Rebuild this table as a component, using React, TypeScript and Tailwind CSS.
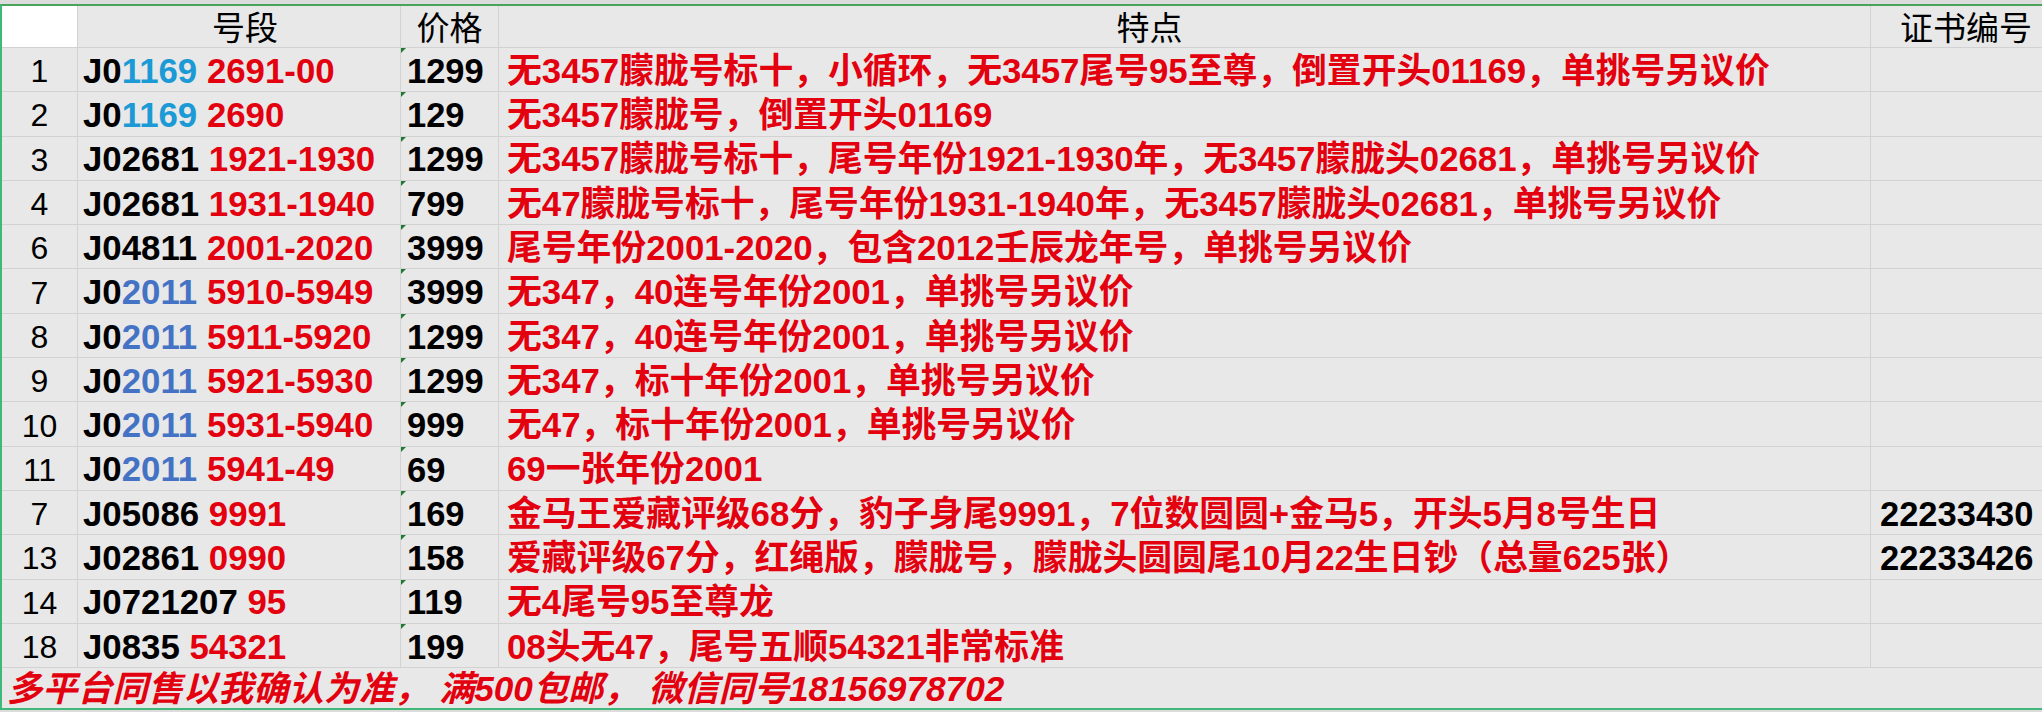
import React from 'react';

type Seg = { t: string; c?: 'red' | 'sky' | 'blue' };

type Row = {
  no: string;
  code: Seg[];
  price: string;
  note: string;
  cert?: string;
};

const rows: Row[] = [
  { no: '1', code: [{ t: 'J0' }, { t: '1169', c: 'sky' }, { t: ' ' }, { t: '2691-00', c: 'red' }], price: '1299', note: '无3457朦胧号标十，小循环，无3457尾号95至尊，倒置开头01169，单挑号另议价' },
  { no: '2', code: [{ t: 'J0' }, { t: '1169', c: 'sky' }, { t: ' ' }, { t: '2690', c: 'red' }], price: '129', note: '无3457朦胧号，倒置开头01169' },
  { no: '3', code: [{ t: 'J02681 ' }, { t: '1921-1930', c: 'red' }], price: '1299', note: '无3457朦胧号标十，尾号年份1921-1930年，无3457朦胧头02681，单挑号另议价' },
  { no: '4', code: [{ t: 'J02681 ' }, { t: '1931-1940', c: 'red' }], price: '799', note: '无47朦胧号标十，尾号年份1931-1940年，无3457朦胧头02681，单挑号另议价' },
  { no: '6', code: [{ t: 'J04811 ' }, { t: '2001-2020', c: 'red' }], price: '3999', note: '尾号年份2001-2020，包含2012壬辰龙年号，单挑号另议价' },
  { no: '7', code: [{ t: 'J0' }, { t: '2011', c: 'blue' }, { t: ' ' }, { t: '5910-5949', c: 'red' }], price: '3999', note: '无347，40连号年份2001，单挑号另议价' },
  { no: '8', code: [{ t: 'J0' }, { t: '2011', c: 'blue' }, { t: ' ' }, { t: '5911-5920', c: 'red' }], price: '1299', note: '无347，40连号年份2001，单挑号另议价' },
  { no: '9', code: [{ t: 'J0' }, { t: '2011', c: 'blue' }, { t: ' ' }, { t: '5921-5930', c: 'red' }], price: '1299', note: '无347，标十年份2001，单挑号另议价' },
  { no: '10', code: [{ t: 'J0' }, { t: '2011', c: 'blue' }, { t: ' ' }, { t: '5931-5940', c: 'red' }], price: '999', note: '无47，标十年份2001，单挑号另议价' },
  { no: '11', code: [{ t: 'J0' }, { t: '2011', c: 'blue' }, { t: ' ' }, { t: '5941-49', c: 'red' }], price: '69', note: '69一张年份2001' },
  { no: '7', code: [{ t: 'J05086 ' }, { t: '9991', c: 'red' }], price: '169', note: '金马王爱藏评级68分，豹子身尾9991，7位数圆圆+金马5，开头5月8号生日', cert: '22233430' },
  { no: '13', code: [{ t: 'J02861 ' }, { t: '0990', c: 'red' }], price: '158', note: '爱藏评级67分，红绳版，朦胧号，朦胧头圆圆尾10月22生日钞（总量625张）', cert: '22233426' },
  { no: '14', code: [{ t: 'J0721207 ' }, { t: '95', c: 'red' }], price: '119', note: '无4尾号95至尊龙' },
  { no: '18', code: [{ t: 'J0835 ' }, { t: '54321', c: 'red' }], price: '199', note: '08头无47，尾号五顺54321非常标准' },
];

const segColor = {
  red: 'text-[#e3000f]',
  sky: 'text-[#1b9ad6]',
  blue: 'text-[#4472c4]',
};

const cell = 'flex items-center border-b border-r border-[#d2d2d2] pt-[3px]';

export default function App() {
  return (
    <div className="h-[712px] w-[2042px] overflow-hidden bg-[#dcdcdc] pt-[4px]">
      <div className="h-[706px] border-t-2 border-l-2 border-b-2 border-t-[#4aa35a] border-l-[#3fb87a] border-b-[#3fb87a] border-l-dashed border-b-dashed bg-[#e8e8e8] font-['Liberation_Sans','Noto_Sans_CJK_SC',sans-serif] text-black">
        <div className="grid grid-cols-[76px_323px_98px_1372px_171px]">
          {/* header */}
          <div className="h-[42px] border-b border-r border-[#d2d2d2] bg-white" />
          <div className="flex h-[42px] items-center justify-center border-b border-r border-[#d2d2d2] pl-[12px] font-['Noto_Sans_CJK_SC',sans-serif] text-[33px] leading-none">
            号段
          </div>
          <div className="flex h-[42px] items-center justify-center border-b border-r border-[#d2d2d2] font-['Noto_Sans_CJK_SC',sans-serif] text-[33px] leading-none">
            价格
          </div>
          <div className="flex h-[42px] items-center justify-center border-b border-r border-[#d2d2d2] pr-[70px] font-['Noto_Sans_CJK_SC',sans-serif] text-[33px] leading-none">
            特点
          </div>
          <div className="flex h-[42px] items-center justify-end border-b border-[#d2d2d2] pr-[10px] font-['Noto_Sans_CJK_SC',sans-serif] text-[33px] leading-none">
            证书编号
          </div>

          {rows.map((r, i) => (
            <React.Fragment key={i}>
              <div className={`${cell} h-[44.3px] justify-center text-[32px] leading-none`}>{r.no}</div>
              <div className={`${cell} h-[44.3px] whitespace-pre pl-[5px] text-[34.8px] font-bold leading-none`}>
                {r.code.map((s, j) => (
                  <span key={j} className={s.c ? segColor[s.c] : ''}>
                    {s.t}
                  </span>
                ))}
              </div>
              <div className={`${cell} relative h-[44.3px] pl-[6px] text-[34.5px] font-bold leading-none`}>
                <span className="absolute left-0 top-0 h-0 w-0 border-t-[5px] border-r-[5px] border-t-[#1f7a35] border-r-transparent" />
                {r.price}
              </div>
              <div className={`${cell} h-[44.3px] whitespace-nowrap pl-[8px] text-[34.8px] font-bold leading-none text-[#e3000f]`}>
                {r.note}
              </div>
              <div className="flex h-[44.3px] items-center border-b border-[#d2d2d2] pl-[9px] pt-[3px] text-[34.5px] font-bold leading-none">
                {r.cert}
              </div>
            </React.Fragment>
          ))}
        </div>
        <div className="flex h-[40px] items-center pl-[5px] text-[35.2px] font-bold italic leading-none text-[#e3000f]">
          多平台同售以我确认为准， 满500包邮， 微信同号18156978702
        </div>
      </div>
    </div>
  );
}
